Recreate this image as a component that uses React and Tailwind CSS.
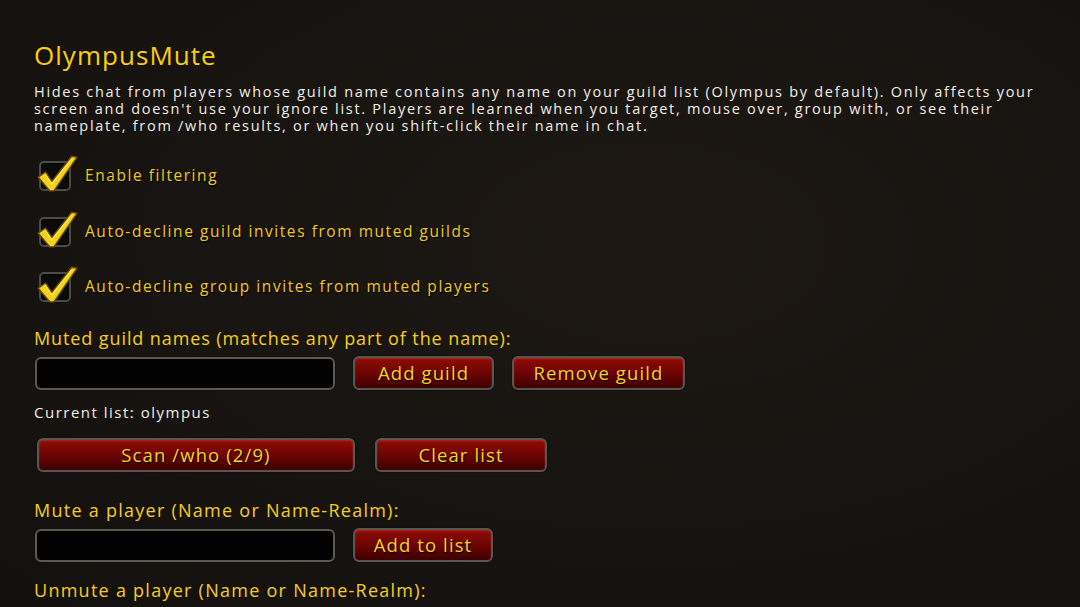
import React from "react";

const font = { fontFamily: '"Open Sans", "Liberation Sans", sans-serif' };

function Check() {
  return (
    <div className="relative h-[32px] w-[34px] shrink-0">
      <div className="absolute inset-[1px] rounded-[5px] border-2 border-[#4a4a48] bg-[#0c0b0a] shadow-[inset_0_0_3px_#000]" />
      <svg className="absolute -left-[4px] -top-[9px] h-[44px] w-[44px]" viewBox="0 0 42 42">
        <path
          d="M4 25 L11 20 L17 29 L36 5 L41 6 L19 38 L15 38 Z"
          fill="#f2d21a"
          stroke="#6a4a00"
          strokeWidth="1.3"
          strokeLinejoin="round"
        />
        <path d="M11 22.5 L17 31.5 L36 7.5" fill="none" stroke="#fff3a0" strokeWidth="1" opacity="0.6" />
      </svg>
    </div>
  );
}

function CheckRow({ label }) {
  return (
    <div className="flex items-center gap-[13px] pl-[38px]">
      <Check />
      <span className="text-[15.5px] tracking-[0.1em] text-[#f0cc1a] [text-shadow:1px_1px_1px_#000]">{label}</span>
    </div>
  );
}

function Btn({ children, w }) {
  return (
    <button
      className={`${w} h-[34px] rounded-[6px] border-2 border-[#5a5550] bg-gradient-to-b from-[#8e0c05] via-[#6e0402] to-[#3c0100] text-[18.5px] tracking-[0.06em] text-[#f6d31a] shadow-[0_0_0_1px_#111,inset_0_1px_2px_rgba(255,120,80,0.3)] [text-shadow:1px_1px_1px_#000]`}
    >
      {children}
    </button>
  );
}

function Input() {
  return (
    <div className="h-[33px] w-[300px] rounded-[6px] border-2 border-[#5e5850] bg-[#030202] shadow-[0_0_0_1px_#111]" />
  );
}

export default function App() {
  return (
    <div
      className="h-[607px] w-[1080px] overflow-hidden bg-[radial-gradient(ellipse_at_60%_40%,#1d1814,#13100d)] text-white"
      style={font}
    >
      <div className="pl-[34px] pt-[40px] text-[26px] leading-[30px] tracking-[0.04em] text-[#f8cf0e]">
        OlympusMute
      </div>
      <p className="mt-[13px] w-[1070px] pl-[34px] text-[14.5px] leading-[17px] tracking-[0.118em] text-[#f2eee6]">
        Hides chat from players whose guild name contains any name on your guild list (Olympus by default). Only affects your
        <br />
        screen and doesn't use your ignore list. Players are learned when you target, mouse over, group with, or see their
        <br />
        nameplate, from /who results, or when you shift-click their name in chat.
      </p>
      <div className="mt-[26px] flex flex-col gap-[23.5px]">
        <CheckRow label="Enable filtering" />
        <CheckRow label="Auto-decline guild invites from muted guilds" />
        <CheckRow label="Auto-decline group invites from muted players" />
      </div>
      <div className="mt-[24px] pl-[34px] text-[18px] leading-[22px] tracking-[0.05em] text-[#f6cf16]">
        Muted guild names (matches any part of the name):
      </div>
      <div className="mt-[7px] flex items-center gap-[18px] pl-[35px]">
        <Input />
        <Btn w="w-[141px]">Add guild</Btn>
        <Btn w="w-[173px]">Remove guild</Btn>
      </div>
      <div className="mt-[12px] pl-[34px] text-[15px] leading-[20px] tracking-[0.1em] text-[#f2eee6]">
        Current list: olympus
      </div>
      <div className="mt-[16px] flex items-center gap-[20px] pl-[37px]">
        <Btn w="w-[318px]">Scan /who (2/9)</Btn>
        <Btn w="w-[172px]">Clear list</Btn>
      </div>
      <div className="mt-[27px] pl-[34px] text-[18px] leading-[22px] tracking-[0.07em] text-[#f6cf16]">
        Mute a player (Name or Name-Realm):
      </div>
      <div className="mt-[7px] flex items-center gap-[18px] pl-[35px]">
        <Input />
        <Btn w="w-[140px]">Add to list</Btn>
      </div>
      <div className="mt-[17px] pl-[34px] text-[18px] leading-[22px] tracking-[0.07em] text-[#f6cf16]">
        Unmute a player (Name or Name-Realm):
      </div>
    </div>
  );
}
